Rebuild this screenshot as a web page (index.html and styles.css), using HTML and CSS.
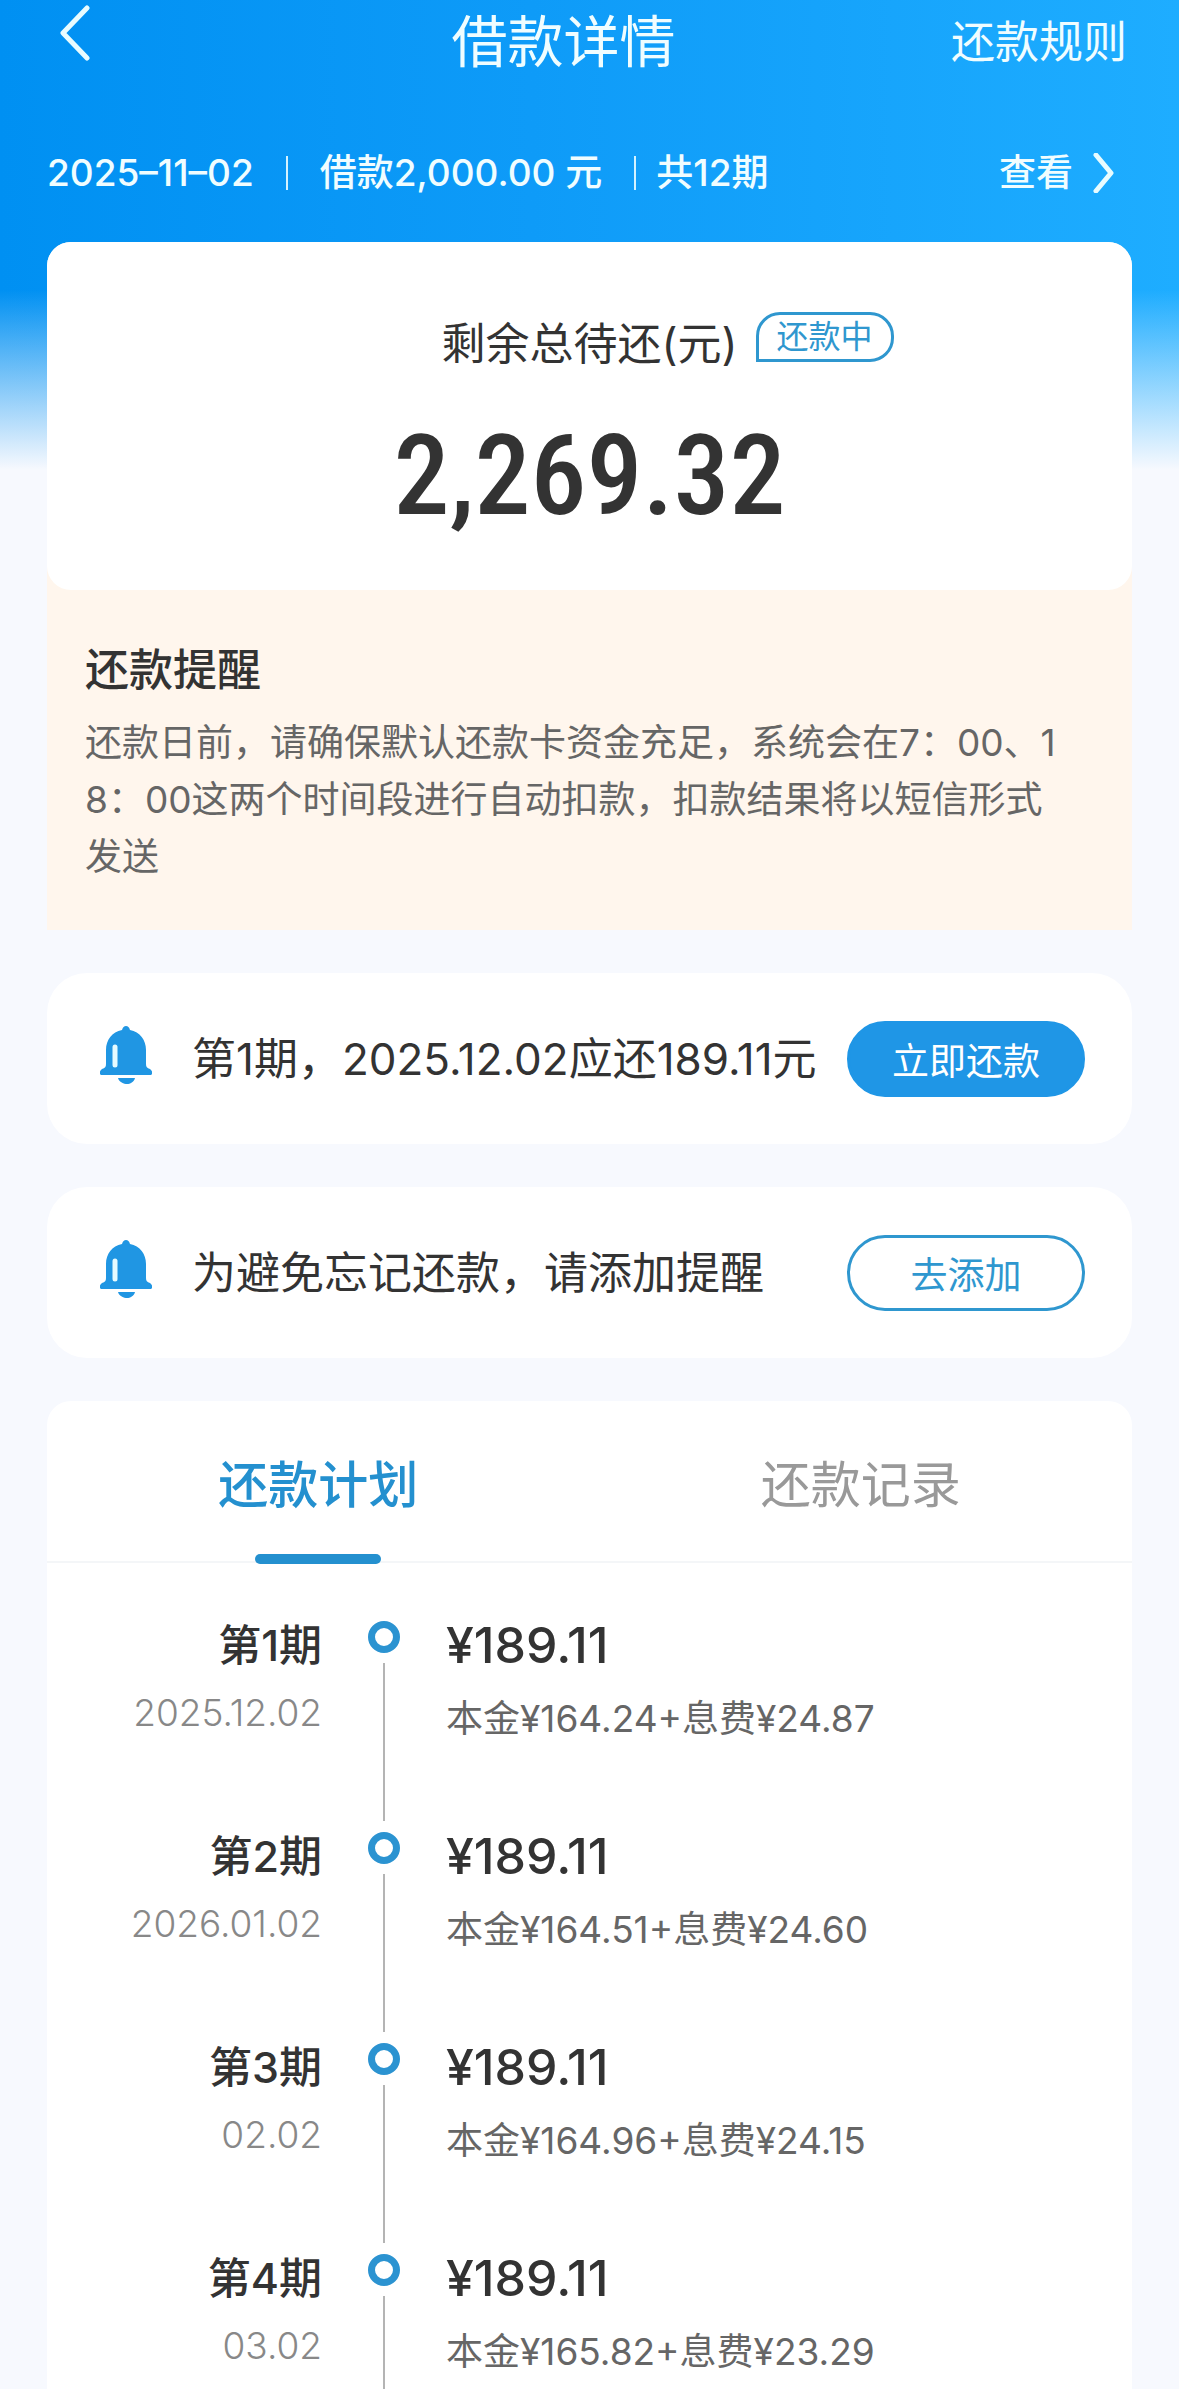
FILE: index.html
```
<!DOCTYPE html>
<html lang="zh-CN">
<head>
	<meta charset="UTF-8">
	<meta name="viewport" content="width=device-width, initial-scale=1.0">
	<title>借款详情</title>
	<link rel="stylesheet" href="styles.css">
</head>
<body>
	<div class="page">
		<header class="header">
			<button class="back" type="button" aria-label="返回">
				<svg width="32" height="56" viewBox="0 0 32 56"><path d="M29 3L5 28l24 25"/></svg>
			</button>
			<h1>借款详情</h1>
			<a class="rules" href="#">还款规则</a>
		</header>

		<div class="meta">
			<span>2025–11–02</span>
			<span class="loan">借款2,000.00 元</span>
			<span class="total">共12期</span>
			<a class="check" href="#">查看
				<svg width="22" height="40" viewBox="0 0 22 40"><path d="M3 2l15 18L3 38"/></svg>
			</a>
		</div>

		<main>
			<!-- 剩余待还 -->
			<section class="summary">
				<div class="balance">
					<p class="label">剩余总待还(元)<span class="badge">还款中</span></p>
					<p class="amount">2,269.32</p>
				</div>
				<div class="notice">
					<h2>还款提醒</h2>
					<p>还款日前，请确保默认还款卡资金充足，系统会在7：00、18：00这两个时间段进行自动扣款，扣款结果将以短信形式发送</p>
				</div>
			</section>

			<section class="remind">
				<svg class="bell" width="52" height="58" viewBox="0 0 52 58">
					<path class="body" d="M26 0c2 0 3 1 4 4 10 2 16 10 16 20v14c0 3 1 4 4 5 3 2 3 6 0 6H2c-3 0-3-4 0-6 3-1 4-2 4-5V24C6 14 12 6 22 4c1-3 2-4 4-4z"/>
					<path class="body" d="M18 52h17c-1 4-5 6-8 6s-8-2-9-6z"/>
					<path class="shine" d="M15 21v18"/>
				</svg>
				<p>第1期，2025.12.02应还189.11元</p>
				<button class="btn primary" type="button">立即还款</button>
			</section>

			<section class="remind">
				<svg class="bell" width="52" height="58" viewBox="0 0 52 58">
					<path class="body" d="M26 0c2 0 3 1 4 4 10 2 16 10 16 20v14c0 3 1 4 4 5 3 2 3 6 0 6H2c-3 0-3-4 0-6 3-1 4-2 4-5V24C6 14 12 6 22 4c1-3 2-4 4-4z"/>
					<path class="body" d="M18 52h17c-1 4-5 6-8 6s-8-2-9-6z"/>
					<path class="shine" d="M15 21v18"/>
				</svg>
				<p>为避免忘记还款，请添加提醒</p>
				<button class="btn" type="button">去添加</button>
			</section>

			<!-- 还款计划 -->
			<section class="plan">
				<div class="tabs">
					<button class="tab current" type="button">还款计划</button>
					<button class="tab" type="button">还款记录</button>
				</div>
				<ul class="list">
					<li>
						<div class="term"><h3>第1期</h3><p>2025.12.02</p></div>
						<div class="line"><i class="dot"></i></div>
						<div class="money"><strong>¥189.11</strong><p>本金¥164.24+息费¥24.87</p></div>
					</li>
					<li>
						<div class="term"><h3>第2期</h3><p>2026.01.02</p></div>
						<div class="line"><i class="dot"></i></div>
						<div class="money"><strong>¥189.11</strong><p>本金¥164.51+息费¥24.60</p></div>
					</li>
					<li>
						<div class="term"><h3>第3期</h3><p>02.02</p></div>
						<div class="line"><i class="dot"></i></div>
						<div class="money"><strong>¥189.11</strong><p>本金¥164.96+息费¥24.15</p></div>
					</li>
					<li>
						<div class="term"><h3>第4期</h3><p>03.02</p></div>
						<div class="line"><i class="dot"></i></div>
						<div class="money"><strong>¥189.11</strong><p>本金¥165.82+息费¥23.29</p></div>
					</li>
				</ul>
			</section>
		</main>
	</div>
</body>
</html>
```

FILE: styles.css
```
*{
	margin:0;
	padding:0;
	box-sizing:border-box;
}
body{
	font-family:Inter,"Noto Sans CJK SC",sans-serif;
	color:#333;
	background:#f7f9fe;
}
ul{
	list-style:none;
}
a{
	color:inherit;
	text-decoration:none;
}
button{
	font-family:inherit;
	border:none;
	background:none;
	cursor:pointer;
}
svg{
	display:block;
	flex:none;
}
.page{
	background:
		linear-gradient(to bottom,rgba(247,249,254,0) 290px,#f7f9fe 470px),
		linear-gradient(to right,#0090f2,#0e9bf8 45%,#1eadff);
}

/* 顶部 */
.header{
	display:grid;
	grid-template-columns:1fr auto 1fr;
	align-items:center;
	height:84px;
	padding-right:52px;
	color:#f0fdff;
}
.header h1{
	font-size:56px;
	font-weight:400;
	line-height:80px;
}
.back{
	justify-self:start;
	align-self:start;
	padding:5px 0 0 58px;
}
.header path,.meta path{
	fill:none;
	stroke:#e8fcff;
	stroke-width:5;
	stroke-linecap:round;
	stroke-linejoin:round;
}
.rules{
	justify-self:end;
	font-size:44px;
	line-height:64px;
}
.meta{
	display:flex;
	align-items:center;
	padding:61px 64px 41px 47px;
	font-size:37px;
	font-weight:500;
	line-height:56px;
	color:#f0fdff;
}
.loan,.total{
	display:flex;
	align-items:center;
	white-space:pre;
}
.loan::before,.total::before{
	content:"";
	width:2px;
	height:34px;
	margin:0 32px;
	background:#d3f2ff;
}
.total::before{
	margin-right:20px;
}
.check{
	display:flex;
	align-items:center;
	gap:20px;
	margin-left:auto;
}

main{
	display:flex;
	flex-direction:column;
	gap:43px;
	padding:0 47px;
}

/* 剩余待还 */
.summary{
	border-radius:24px 24px 0 0;
	background:#fff6ed;
}
.balance{
	padding:70px 0 44px;
	border-radius:24px;
	background:#fff;
	text-align:center;
}
.label{
	position:relative;
	width:fit-content;
	margin:0 auto;
	font-size:44px;
	line-height:64px;
}
.badge{
	position:absolute;
	left:100%;
	top:0;
	margin-left:18px;
	padding:0 18px;
	border:3px solid #2f97cf;
	border-radius:24px 24px 24px 0;
	font-size:32px;
	line-height:44px;
	color:#2f97cf;
	white-space:nowrap;
}
.amount{
	margin-top:30px;
	font-family:"Roboto Condensed",Roboto,sans-serif;
	font-size:112px;
	font-weight:500;
	line-height:140px;
}
.notice{
	padding:48px 56px 45px 38px;
}
.notice h2{
	font-size:44px;
	font-weight:500;
	line-height:64px;
}
.notice p{
	margin-top:12px;
	font-size:37px;
	line-height:57px;
	color:#666;
	word-break:break-all;
}

/* 提醒 */
.remind{
	display:flex;
	align-items:center;
	min-height:171px;
	padding:0 47px 0 53px;
	border-radius:40px;
	background:#fff;
}
.bell{
	margin:0 40px 8px 0;
}
.bell .body{
	fill:#2096e3;
}
.bell .shine{
	fill:none;
	stroke:#e6fbff;
	stroke-width:5;
	stroke-linecap:round;
}
.remind p{
	flex:1;
	font-size:44px;
	line-height:64px;
	white-space:nowrap;
}
.btn{
	width:238px;
	height:76px;
	border:3px solid #2f97cf;
	border-radius:38px;
	font-size:37px;
	color:#2f97cf;
}
.btn.primary{
	border-color:#1f96e6;
	background:#1f96e6;
	color:#fff;
}

/* 还款计划 */
.plan{
	border-radius:24px 24px 0 0;
	background:#fff;
}
.tabs{
	display:flex;
	border-bottom:2px solid #f4f6f8;
}
.tab{
	position:relative;
	flex:1;
	height:160px;
	font-size:50px;
	color:#999;
}
.tab.current{
	font-weight:500;
	color:#2490cf;
}
.tab.current::after{
	content:"";
	position:absolute;
	left:50%;
	bottom:-3px;
	width:126px;
	height:10px;
	margin-left:-63px;
	border-radius:5px;
	background:#2490cf;
}
.list{
	padding-top:47px;
}
.list li{
	display:grid;
	grid-template-columns:275px 124px 1fr;
	min-height:211px;
}
.list li:last-child{
	min-height:147px;
}
.term{
	padding-top:3px;
	text-align:right;
}
.term h3{
	font-size:43px;
	font-weight:500;
	line-height:64px;
}
.term p{
	margin-top:8px;
	font-size:37px;
	font-weight:300;
	line-height:56px;
	color:#888;
}
.line{
	display:flex;
	flex-direction:column;
	align-items:center;
	padding-top:11px;
}
.dot{
	width:32px;
	height:32px;
	border:7px solid #2b93d1;
	border-radius:50%;
}
.line::after{
	content:"";
	flex:1;
	width:2px;
	margin-top:10px;
	background:#b4b4b4;
}
.money{
	padding-top:3px;
}
.money strong{
	display:block;
	font-size:50px;
	font-weight:500;
	line-height:64px;
}
.money p{
	margin-top:12px;
	font-size:37px;
	line-height:60px;
	color:#666;
}
```
